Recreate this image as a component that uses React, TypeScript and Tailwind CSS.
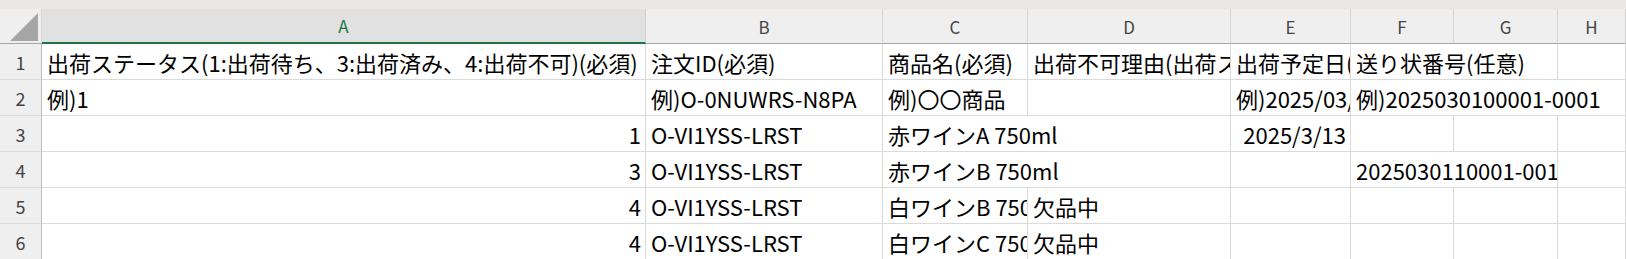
import React from 'react';

type Cell = { t?: string; span?: 1 | 2 | 3; right?: boolean };

const letters = ['A', 'B', 'C', 'D', 'E', 'F', 'G', 'H'];

const rows: Cell[][] = [
  [
    { t: '出荷ステータス(1:出荷待ち、3:出荷済み、4:出荷不可)(必須)' },
    { t: '注文ID(必須)' },
    { t: '商品名(必須)' },
    { t: '出荷不可理由(出荷ステータスが4の場合必須)' },
    { t: '出荷予定日(任意)' },
    { t: '送り状番号(任意)', span: 2 },
    {},
  ],
  [
    { t: '例)1' },
    { t: '例)O-0NUWRS-N8PA' },
    { t: '例)〇〇商品' },
    {},
    { t: '例)2025/03/01' },
    { t: '例)2025030100001-0001', span: 3 },
  ],
  [
    { t: '1', right: true },
    { t: 'O-VI1YSS-LRST' },
    { t: '赤ワインA 750ml', span: 2 },
    { t: '2025/3/13', right: true },
    {},
    {},
    {},
  ],
  [
    { t: '3', right: true },
    { t: 'O-VI1YSS-LRST' },
    { t: '赤ワインB 750ml', span: 2 },
    {},
    { t: '2025030110001-001', span: 2 },
    {},
  ],
  [
    { t: '4', right: true },
    { t: 'O-VI1YSS-LRST' },
    { t: '白ワインB 750ml' },
    { t: '欠品中' },
    {},
    {},
    {},
    {},
  ],
  [
    { t: '4', right: true },
    { t: 'O-VI1YSS-LRST' },
    { t: '白ワインC 750ml' },
    { t: '欠品中' },
    {},
    {},
    {},
    {},
  ],
];

const spanClass = { 1: '', 2: 'col-span-2', 3: 'col-span-3' };

export default function App() {
  return (
    <div className="w-[1626px] h-[259px] overflow-hidden bg-white font-['Noto_Sans_CJK_JP','Noto_Sans',sans-serif]">
      {/* strip above the column headers */}
      <div className="h-[9px] bg-[#eae8e7]" />

      <div className="grid grid-cols-[42px_604px_237px_145px_203px_120px_103px_104px_1fr]">
        {/* corner */}
        <div className="h-[35px] bg-[#efefef] border-b border-b-[#a6a6a6] border-r border-r-[#d4d4d4] flex items-end justify-end pr-[3px] pb-[2px]">
          <svg width="28" height="28" viewBox="0 0 28 28">
            <polygon points="28,0 28,28 0,28" fill="#a5a5a5" />
          </svg>
        </div>
        {letters.map((l) =>
          l === 'A' ? (
            <div
              key={l}
              className="h-[35px] bg-[#e1e1e1] border-b-2 border-b-[#217346] border-r border-r-[#d0d0d0] flex items-center justify-center text-[17px] text-[#217346] leading-none"
            >
              {l}
            </div>
          ) : (
            <div
              key={l}
              className="h-[35px] bg-[#efefef] border-b border-b-[#a6a6a6] border-r border-r-[#d4d4d4] flex items-center justify-center text-[17px] text-[#444444] leading-none"
            >
              {l}
            </div>
          )
        )}

        {rows.map((row, i) => (
          <React.Fragment key={i}>
            <div className="h-[36px] bg-[#efefef] border-b border-b-[#d9d9d9] border-r border-r-[#bcbcbc] flex items-center justify-center text-[18px] text-[#444444] leading-none">
              {i + 1}
            </div>
            {row.map((c, j) => (
              <div
                key={j}
                className={`h-[36px] border-b border-r border-[#dadada] flex items-center overflow-hidden whitespace-nowrap pl-[5px] pr-[4px] text-[22px] text-black leading-none ${
                  c.right ? 'justify-end' : 'justify-start'
                } ${spanClass[c.span ?? 1]}`}
              >
                {c.t}
              </div>
            ))}
          </React.Fragment>
        ))}
      </div>
    </div>
  );
}
